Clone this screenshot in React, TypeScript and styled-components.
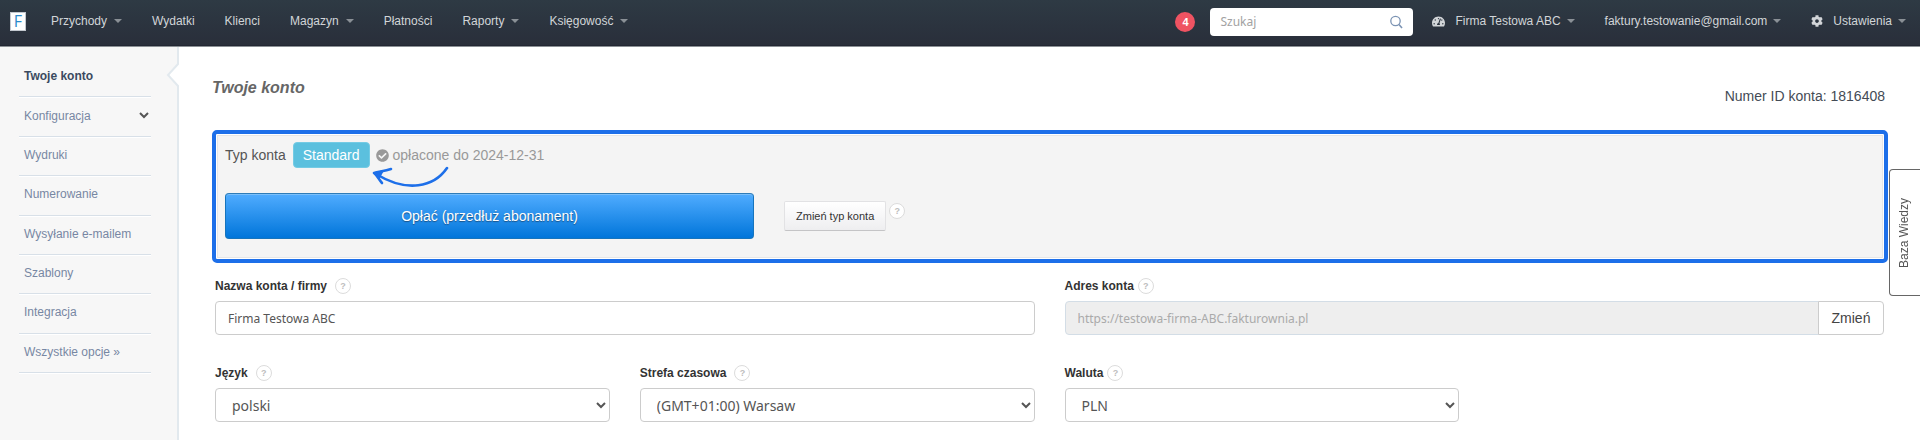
import React from "react";
import styled, { createGlobalStyle } from "styled-components";
import { FaCheckCircle, FaCog, FaTachometerAlt } from "react-icons/fa";

const GlobalStyle = createGlobalStyle`
  * { box-sizing: border-box; }
  body {
    margin: 0;
    background: #fff;
    color: #333;
    font-family: "Liberation Sans", Arial, sans-serif;
    font-size: 14px;
    line-height: 20px;
  }
  a { color: inherit; text-decoration: none; }
  h1, ul { margin: 0; padding: 0; }
  ul { list-style: none; }
  button, input, select { margin: 0; font-family: inherit; }
`;

const formFont = `"Noto Sans", Tahoma, sans-serif`;

const TopBar = styled.header`
  display: flex;
  align-items: center;
  height: 47px;
  padding: 0 14px 4px 10px;
  background: linear-gradient(#2e3a44, #292e3a);
  border-bottom: 1px solid #8b9095;
  box-shadow: inset 0 -1px 0 #222733;
  color: #d2d5d8;
  font-size: 12px;
`;

const Logo = styled.a`
  display: grid;
  place-items: center;
  width: 16px;
  height: 19px;
  margin: 0 10px 0 0;
  background: #fff;
  border: 1px solid #c3c8cf;
  color: #2b8acb;
  font: 16px/17px "Open Sans", sans-serif;
`;

const Caret = styled.span`
  margin-left: 6px;
  border: 4px solid transparent;
  border-top-color: #8a9096;
  border-bottom: 0;
`;

const Menu = styled.nav<{ $caretGap?: number }>`
  display: flex;
  ${Caret} { margin-left: ${(p) => p.$caretGap ?? 6}px; }
`;

const MenuLink = styled.a<{ $flush?: boolean }>`
  display: flex;
  align-items: center;
  padding: 0 ${(p) => (p.$flush ? "0" : "15px")} 0 15px;
  white-space: nowrap;
  svg { margin-right: 10px; font-size: ${(p) => (p.$flush ? "12px" : "13px")}; }
`;

const Tools = styled.div`
  display: flex;
  align-items: center;
  margin-left: auto;
`;

const Counter = styled.span`
  width: 20px;
  height: 20px;
  margin: 2px 15px 0 0;
  border-radius: 10px;
  background: #ef5362;
  color: #fff;
  font-size: 11px;
  font-weight: bold;
  line-height: 20px;
  text-align: center;
`;

const Search = styled.label`
  display: flex;
  align-items: center;
  width: 203px;
  height: 28px;
  margin: 2px 4px 0 0;
  padding: 0 10px;
  border-radius: 4px;
  background: #fff;
  color: #7b93b3;
`;

const SearchInput = styled.input`
  flex: 1;
  min-width: 0;
  padding: 0;
  border: 0;
  outline: 0;
  background: none;
  font: 12px/20px ${formFont};
  color: #555;
  &::placeholder { color: #a2a2a2; opacity: 1; }
`;

const Body = styled.div`
  display: flex;
  align-items: stretch;
`;

const Sidebar = styled.aside`
  position: relative;
  flex: 0 0 179px;
  min-height: 393px;
  padding: 11px 26px 0 19px;
  border-right: 2px solid #e2e9ee;
  background: #f7f7f7;
`;

const SideMenu = styled.ul`
  display: grid;
  grid-auto-rows: 1fr;
  height: 315px;
`;

const Notch = styled.svg`
  position: absolute;
  top: 16px;
  right: -2px;
`;

const SideLink = styled.a<{ $active?: boolean }>`
  display: flex;
  align-items: center;
  justify-content: space-between;
  height: 100%;
  padding: 0 2px 2px 5px;
  border-bottom: 1px solid #d8e0e8;
  box-shadow: 0 1px 0 #fff;
  color: ${(p) => (p.$active ? "#3b4a60" : "#7787a3")};
  font-size: 12px;
  font-weight: ${(p) => (p.$active ? "bold" : "normal")};
  white-space: nowrap;
`;

const Main = styled.main`
  flex: 1;
  min-width: 0;
  padding: 30px 32px 0 33px;
`;

const Heading = styled.div`
  display: flex;
  justify-content: space-between;
  height: 53px;
  padding-right: 3px;
`;

const Title = styled.h1`
  color: #666;
  font-size: 16px;
  font-style: italic;
  font-weight: bold;
  line-height: 22px;
`;

const AccountId = styled.p`
  margin: 0;
  padding-top: 9px;
  color: #444b55;
`;

const Plan = styled.section`
  height: 133px;
  padding: 8px 9px;
  border: 4px solid #1d6fe9;
  border-radius: 5px;
  background: #f4f4f4;
  box-shadow: inset 0 0 0 1px #fff, inset 0 0 0 2px #e6e6e6;
`;

const PlanInfo = styled.div`
  position: relative;
  display: flex;
  align-items: center;
  color: #555;
`;

const PlanBadge = styled.span`
  margin: 0 6px 0 7px;
  padding: 2px 9px;
  border: 1px solid #74cbe4;
  border-radius: 4px;
  background: #5bc0de;
  color: #fff;
`;

const PaidUntil = styled.span`
  display: flex;
  align-items: center;
  gap: 4px;
  color: #999;
  svg { font-size: 13px; }
`;

const Arrow = styled.svg`
  position: absolute;
  top: 23px;
  left: 145px;
`;

const PlanActions = styled.div`
  display: flex;
  align-items: flex-start;
  margin-top: 25px;
`;

const PayButton = styled.button`
  flex: 0 1 529px;
  height: 46px;
  border: 1px solid #1674bd;
  border-top-color: #2e7cb8;
  border-radius: 4px;
  background: linear-gradient(#50acff, #0075da);
  box-shadow: inset 0 1px 0 #7bc0fb;
  color: #fff;
  font-size: 14px;
  text-shadow: 0 1px 1px #1c5488;
`;

const ChangeButton = styled.button`
  height: 30px;
  margin: 8px 3px 0 30px;
  padding: 0 11px;
  border: 1px solid #e2e2e4;
  border-bottom-color: #c4c4c6;
  border-radius: 2px;
  background: linear-gradient(#fff, #eeeef0);
  color: #333;
  font-size: 11px;
  white-space: nowrap;
`;

const HelpButton = styled.button`
  width: 16px;
  height: 16px;
  padding: 0;
  border: 1px solid #dcdcdc;
  border-radius: 8px;
  background: #fff;
  color: #bdbdbd;
  font-size: 9px;
  font-weight: bold;
  line-height: 14px;
  ${PlanActions} & { margin-top: 10px; }
`;

const Form = styled.form`
  display: grid;
  grid-template-columns: repeat(4, minmax(0, 1fr));
  gap: 28px 30px;
  padding: 13px 4px 0 3px;
`;

const Field = styled.div<{ $wide?: boolean }>`
  grid-column: span ${(p) => (p.$wide ? 2 : 1)};
`;

const LabelRow = styled.div<{ $tight?: boolean }>`
  display: flex;
  align-items: center;
  gap: ${(p) => (p.$tight ? "4px" : "8px")};
  height: 20px;
  margin-bottom: 5px;
`;

const Label = styled.label`
  color: #333;
  font-size: 12px;
  font-weight: bold;
`;

const TextInput = styled.input`
  display: block;
  width: 100%;
  height: 34px;
  padding: 0 12px;
  border: 1px solid #ccc;
  border-radius: 4px;
  background: #fff;
  color: #555;
  font: 12px/20px ${formFont};
  &:disabled {
    border-color: #d3dde6;
    border-radius: 4px 0 0 4px;
    background: #eee;
    color: #aaa;
  }
`;

const Select = styled.select`
  display: block;
  width: 100%;
  height: 34px;
  padding: 0 12px;
  border: 1px solid #ccc;
  border-radius: 4px;
  background: #fff;
  color: #555;
  font: 14px/20px ${formFont};
`;

const InputGroup = styled.div`
  display: flex;
`;

const GroupButton = styled.button`
  width: 66px;
  flex: none;
  margin-left: -1px;
  border: 1px solid #ccc;
  border-radius: 0 4px 4px 0;
  background: #fff;
  color: #444;
  font-size: 14px;
`;

const KnowledgeTab = styled.button`
  position: fixed;
  top: 169px;
  right: 0;
  width: 31px;
  height: 127px;
  padding: 0 0 0 2px;
  border: 1px solid #666;
  border-left: 0;
  border-radius: 0 4px 4px 0;
  background: #fff;
  color: #555;
  font-size: 12px;
  writing-mode: vertical-rl;
  transform: rotate(180deg);
`;

const Chevron = () => (
  <svg width="10" height="7" viewBox="0 0 10 7" fill="none" aria-hidden="true">
    <path d="M1 1l4 4 4-4" stroke="#555" strokeWidth="2" />
  </svg>
);

const Help = () => (
  <HelpButton type="button" aria-label="Pomoc">?</HelpButton>
);

const mainMenu = [
  { text: "Przychody", caret: true },
  { text: "Wydatki" },
  { text: "Klienci" },
  { text: "Magazyn", caret: true },
  { text: "Płatności" },
  { text: "Raporty", caret: true },
  { text: "Księgowość", caret: true },
];

const sideMenu = [
  "Twoje konto",
  "Konfiguracja",
  "Wydruki",
  "Numerowanie",
  "Wysyłanie e-mailem",
  "Szablony",
  "Integracja",
  "Wszystkie opcje »",
];

const selects = [
  { id: "language", label: "Język", value: "polski" },
  { id: "timezone", label: "Strefa czasowa", value: "(GMT+01:00) Warsaw" },
  { id: "currency", label: "Waluta", value: "PLN", tight: true },
];

export default function App() {
  return (
    <>
      <GlobalStyle />
      <TopBar>
        <Logo href="#">F</Logo>
        <Menu $caretGap={7}>
          {mainMenu.map((item) => (
            <MenuLink href="#" key={item.text}>
              {item.text}
              {item.caret && <Caret />}
            </MenuLink>
          ))}
        </Menu>
        <Tools>
          <Counter>4</Counter>
          <Search>
            <SearchInput type="text" placeholder="Szukaj" aria-label="Szukaj" />
            <svg width="14" height="14" viewBox="0 0 14 14" fill="none" stroke="currentColor" aria-hidden="true">
              <circle cx="6.500" cy="6" r="4.7" strokeWidth="1.3" />
              <path d="M10 9.500l3 3.500" strokeWidth="1.6" />
            </svg>
          </Search>
          <Menu>
            <MenuLink href="#"><FaTachometerAlt />Firma Testowa ABC<Caret /></MenuLink>
            <MenuLink href="#">faktury.testowanie@gmail.com<Caret /></MenuLink>
            <MenuLink href="#" $flush><FaCog />Ustawienia<Caret /></MenuLink>
          </Menu>
        </Tools>
      </TopBar>
      <Body>
        <Sidebar>
          <Notch width="13" height="24" viewBox="0 0 13 24" aria-hidden="true">
            <path d="M13 0L2 12l11 12z" fill="#fff" />
            <path d="M12 0v1L2 12l10 11v1" fill="none" stroke="#e2e9ee" strokeWidth="2" />
          </Notch>
          <SideMenu>
            {sideMenu.map((text, i) => (
              <li key={text}>
                <SideLink href="#" $active={i === 0}>
                  {text}
                  {text === "Konfiguracja" && <Chevron />}
                </SideLink>
              </li>
            ))}
          </SideMenu>
        </Sidebar>
        <Main>
          <Heading>
            <Title>Twoje konto</Title>
            <AccountId>Numer ID konta: 1816408</AccountId>
          </Heading>
          <Plan>
            <PlanInfo>
              Typ konta
              <PlanBadge>Standard</PlanBadge>
              <PaidUntil><FaCheckCircle />opłacone do 2024-12-31</PaidUntil>
              <Arrow width="80" height="24" viewBox="0 0 80 24" fill="none" stroke="#1d6fe9" strokeLinecap="round" strokeLinejoin="round" aria-hidden="true">
                <path d="M77 3C64 22 37 28 6 9" strokeWidth="2.6" />
                <path d="M21 4C15 6 10 6.500 4 8C7 10 9 15 12 18" strokeWidth="2.6" />
                <path d="M4 8l9-2-4 7z" fill="#1d6fe9" strokeWidth="1.500" />
              </Arrow>
            </PlanInfo>
            <PlanActions>
              <PayButton type="button">Opłać (przedłuż abonament)</PayButton>
              <ChangeButton type="button">Zmień typ konta</ChangeButton>
              <Help />
            </PlanActions>
          </Plan>
          <Form>
            <Field $wide>
              <LabelRow>
                <Label htmlFor="name">Nazwa konta / firmy</Label>
                <Help />
              </LabelRow>
              <TextInput id="name" type="text" defaultValue="Firma Testowa ABC" />
            </Field>
            <Field $wide>
              <LabelRow $tight>
                <Label htmlFor="address">Adres konta</Label>
                <Help />
              </LabelRow>
              <InputGroup>
                <TextInput id="address" type="text" disabled defaultValue="https://testowa-firma-ABC.fakturownia.pl" />
                <GroupButton type="button">Zmień</GroupButton>
              </InputGroup>
            </Field>
            {selects.map((s) => (
              <Field key={s.id}>
                <LabelRow $tight={s.tight}>
                  <Label htmlFor={s.id}>{s.label}</Label>
                  <Help />
                </LabelRow>
                <Select id={s.id}>
                  <option>{s.value}</option>
                </Select>
              </Field>
            ))}
          </Form>
        </Main>
      </Body>
      <KnowledgeTab type="button">Baza Wiedzy</KnowledgeTab>
    </>
  );
}
